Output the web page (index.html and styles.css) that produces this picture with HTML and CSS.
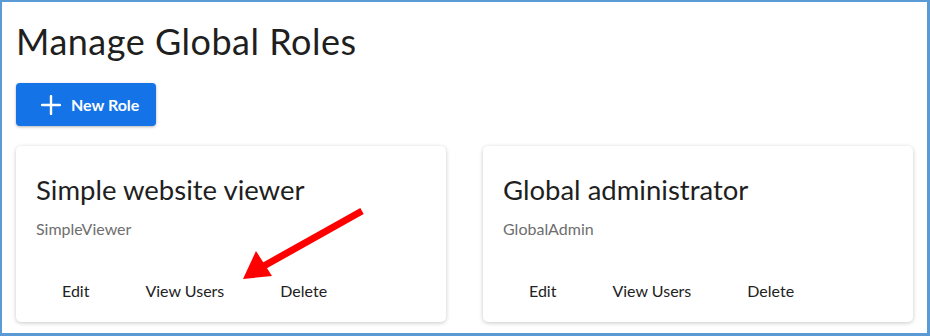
FILE: index.html
```html
<!DOCTYPE html>
<html lang="en">
<head>
    <meta charset="UTF-8">
    <meta name="viewport" content="width=device-width, initial-scale=1.0">
    <title>Manage Global Roles</title>
    <link rel="stylesheet" href="styles.css">
</head>
<body>

    <div class="frame">
        <h1 class="page-title">Manage Global Roles</h1>

        <button class="new-role">
            <svg class="plus" width="20" height="20" viewBox="0 0 20 20">
                <path d="M10 1v18M1 10h18" stroke="#fff" stroke-width="2.4" stroke-linecap="round"/>
            </svg>
            New Role
        </button>

        <div class="cards">
            <div class="card">
                <h2 class="card-title">Simple website viewer</h2>
                <p class="card-id">SimpleViewer</p>
                <div class="actions">
                    <button class="action">Edit</button>
                    <button class="action">View Users</button>
                    <button class="action">Delete</button>
                </div>
            </div>
            <div class="card">
                <h2 class="card-title">Global administrator</h2>
                <p class="card-id">GlobalAdmin</p>
                <div class="actions">
                    <button class="action">Edit</button>
                    <button class="action">View Users</button>
                    <button class="action">Delete</button>
                </div>
            </div>
        </div>

        <!-- annotation arrow -->
        <svg class="arrow" width="930" height="336" viewBox="0 0 930 336">
            <line x1="362" y1="211" x2="262" y2="267" stroke="#f00" stroke-width="7"/>
            <polygon points="243,279 256,251 272,276" fill="#f00"/>
        </svg>
    </div>

</body>
</html>
```

FILE: styles.css
```css
body {
    margin: 0;
    padding: 0;
    background-color: #fff;
    font-family: Lato, "Open Sans", sans-serif;
    color: #2c2c2c;
}

.frame {
    position: relative;
    box-sizing: border-box;
    width: 930px;
    height: 336px;
    border: 2px solid #5b9bd5;
    border-right-width: 3px;
    border-bottom-width: 3px;
    padding: 0 14px;
}

.page-title {
    margin: 0;
    padding-top: 18px;
    font-size: 36px;
    font-weight: 400;
    letter-spacing: 0.5px;
    line-height: 42px;
    color: #1f1f1f;
}

.new-role {
    display: flex;
    align-items: center;
    gap: 10px;
    margin-top: 21px;
    width: 140px;
    height: 43px;
    padding: 0 0 0 25px;
    border: none;
    border-radius: 4px;
    background-color: #1473e6;
    color: #fff;
    font-family: Lato, sans-serif;
    font-size: 16px;
    font-weight: 700;
    box-shadow: 0 1px 3px rgba(0, 0, 0, 0.3);
}

.cards {
    display: flex;
    gap: 37px;
    margin-top: 20px;
}

.card {
    width: 430px;
    height: 176px;
    box-sizing: border-box;
    padding: 26px 20px 0;
    background-color: #fff;
    border-radius: 5px;
    box-shadow: 0 1px 4px rgba(0, 0, 0, 0.22);
}

.card-title {
    margin: 0;
    font-size: 27.5px;
    font-weight: 400;
    line-height: 36px;
    color: #1f1f1f;
}

.card-id {
    margin: 11px 0 0;
    font-size: 16px;
    color: #6e6e6e;
}

.actions {
    display: flex;
    margin-top: 43px;
    padding-left: 26px;
}

.action {
    background: none;
    border: none;
    padding: 0;
    margin-right: 56px;
    font-family: Lato, sans-serif;
    font-size: 16px;
    color: #222;
}

.arrow {
    position: absolute;
    left: -2px;
    top: -2px;
    pointer-events: none;
}
```
